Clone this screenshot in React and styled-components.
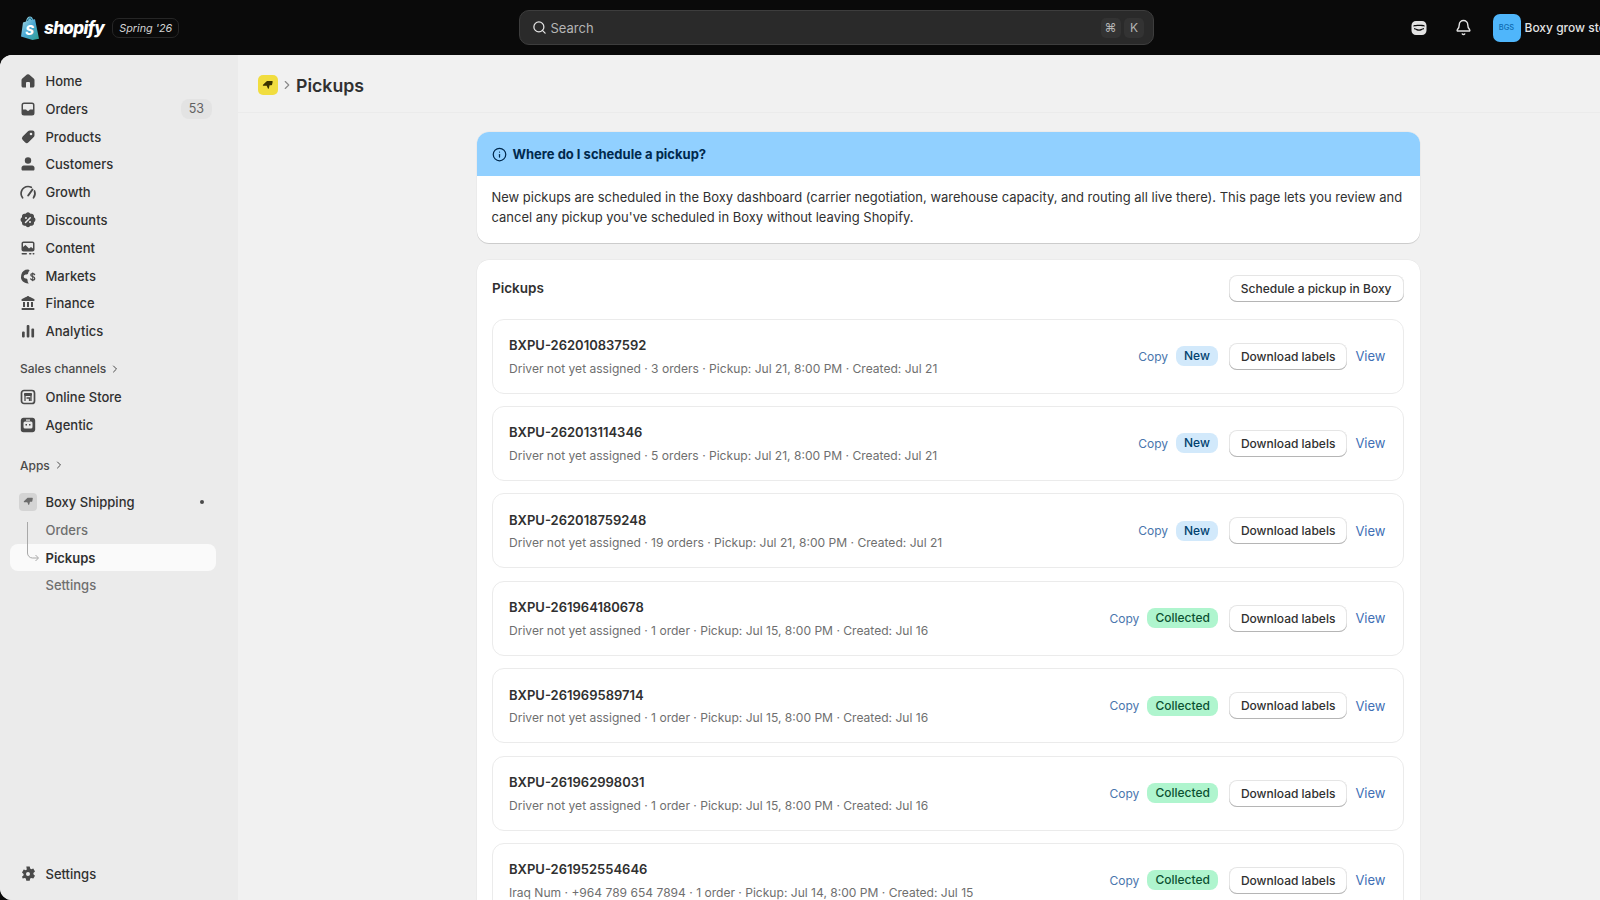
import styled, { createGlobalStyle } from "styled-components";
import { Search, Bell, Info, ChevronRight } from "lucide-react";

const GlobalStyle = createGlobalStyle`
  html, body {
    margin: 0;
    height: 100%;
    overflow: hidden;
    background: #0a0a0a;
  }
  body {
    font-family: Inter, "Liberation Sans", sans-serif;
    font-size: 13px;
    color: #303030;
  }
  * { box-sizing: border-box; }
`;

const Page = styled.div`
  display: flex;
  flex-direction: column;
  width: 1600px;
  height: 900px;
  overflow: hidden;
`;

const TopBar = styled.header`
  display: flex;
  align-items: center;
  flex: 0 0 55px;
  background: #0a0a0a;
  white-space: nowrap;
`;

const Brand = styled.div`
  display: flex;
  align-items: center;
  flex: 0 0 519px;
  padding-left: 20px;
`;

const Wordmark = styled.span`
  margin-left: 4px;
  font-size: 17px;
  font-weight: 800;
  font-style: italic;
  letter-spacing: -0.6px;
  color: #fff;
`;

const EditionTag = styled.span`
  margin-left: 8px;
  padding: 0 6px;
  height: 20px;
  line-height: 19px;
  border: 1px solid #262626;
  border-radius: 7px;
  font-size: 10.8px;
  font-style: italic;
  color: #d4d4d4;
`;

const SearchBox = styled.div`
  display: flex;
  align-items: center;
  gap: 3.5px;
  flex: 0 0 635px;
  height: 35px;
  padding: 0 9px 0 12px;
  background: #2a2a2a;
  border: 1px solid #3d3d3d;
  border-radius: 10px;
  color: #b5b5b5;
`;

const SearchLabel = styled.span`
  flex: 1;
  font-size: 13px;
`;

const KeyCap = styled.span`
  width: 20px;
  height: 20px;
  line-height: 20px;
  border-radius: 5px;
  background: #333;
  text-align: center;
  font-size: 12px;
  color: #b5b5b5;
`;

const TopActions = styled.div`
  display: flex;
  align-items: center;
  padding-left: 255px;
  color: #e3e3e3;
`;

const ActionIcon = styled.span`
  display: flex;
  align-items: center;
  justify-content: center;
  width: 20px;
  margin-right: ${(p) => p.$gap}px;
`;

const Avatar = styled.span`
  width: 28px;
  height: 28px;
  line-height: 28px;
  border-radius: 7px;
  background: #4fb6fb;
  text-align: center;
  font-size: 7.5px;
  font-weight: 500;
  color: #0e6bb0;
`;

const StoreName = styled.span`
  margin-left: 4px;
  font-size: 12px;
  font-weight: 500;
  color: #e3e3e3;
`;

const Frame = styled.div`
  display: flex;
  flex: 1;
  min-height: 0;
  background: #f1f1f1;
  border-radius: 12px 0 0 12px;
  overflow: hidden;
`;

const Sidebar = styled.nav`
  display: flex;
  flex-direction: column;
  flex: 0 0 238px;
  padding: 12.2px 22px 12px 10px;
  background: #ebebeb;
`;

const NavRow = styled.div`
  position: relative;
  display: flex;
  align-items: center;
  height: 27.8px;
  padding-left: 8px;
  border-radius: 8px;
  font-weight: ${(p) => (p.$active ? 600 : 500)};
  font-size: 13px;
  color: ${(p) => (p.$sub ? "#6f6f6f" : "#303030")};
  background: ${(p) => (p.$active ? "#fafafa" : "transparent")};
  ${(p) => p.$active && "color: #303030;"}
`;

const NavIcon = styled.span`
  display: flex;
  flex: 0 0 20px;
  height: 20px;
  color: #4a4a4a;
  margin-right: 7.5px;
`;

const SubSpacer = styled.span`
  flex: 0 0 27.5px;
`;

const Count = styled.span`
  margin-left: auto;
  margin-right: 4px;
  padding: 0 8px;
  height: 20px;
  line-height: 20px;
  border-radius: 8px;
  background: #e3e3e3;
  font-size: 12.5px;
  font-weight: 400;
  color: #616161;
`;

const PinDot = styled.span`
  margin-left: auto;
  margin-right: 12px;
  width: 4px;
  height: 4px;
  border-radius: 50%;
  background: #4a4a4a;
`;

const SectionHead = styled.div`
  display: flex;
  align-items: center;
  gap: 3px;
  height: 28px;
  margin-top: ${(p) => p.$top}px;
  margin-bottom: ${(p) => p.$bottom || 0}px;
  padding-left: 10px;
  font-size: 12px;
  font-weight: 550;
  color: #4a4a4a;
`;

const TreeLine = styled.svg`
  position: absolute;
  left: 16px;
  top: -22px;
  color: #a8a8a8;
`;

const SidebarFoot = styled.div`
  margin-top: auto;
`;

const Main = styled.main`
  flex: 1;
  min-width: 0;
`;

const PageHeader = styled.div`
  display: flex;
  align-items: center;
  height: 58px;
  padding: 3px 0 0 20px;
  border-bottom: 1px solid #ebebeb;
`;

const AppMark = styled.span`
  display: flex;
  align-items: center;
  justify-content: center;
  width: 20px;
  height: 20px;
  border-radius: 5px;
  background: #f1dd3f;
  color: #3a3200;
`;

const Crumb = styled.span`
  display: flex;
  margin: 0 2px 0 2px;
  color: #8a8a8a;
`;

const PageTitle = styled.h1`
  margin: 0;
  font-size: 17.7px;
  font-weight: 600;
  color: #303030;
`;

const Content = styled.div`
  display: flex;
  flex-direction: column;
  gap: 17px;
  width: 943px;
  margin-left: 238.5px;
  padding-top: 19px;
`;

const Card = styled.section`
  background: #fff;
  border-radius: 12px;
  box-shadow: 0 1px 0 rgba(0, 0, 0, 0.13), 0 0 0 0.5px rgba(0, 0, 0, 0.05);
  overflow: hidden;
`;

const BannerHead = styled.div`
  display: flex;
  align-items: center;
  gap: 6px;
  height: 44px;
  padding-left: 15px;
  background: #91d0ff;
  font-weight: 650;
  font-size: 13px;
  color: #00294d;
`;

const BannerBody = styled.p`
  margin: 0;
  padding: 12px 15px 15px;
  line-height: 19.8px;
  font-size: 12.97px;
`;

const ListCard = styled(Card)`
  padding: 15px 16px 16px 15.500px;
`;

const ListHead = styled.div`
  display: flex;
  align-items: center;
  justify-content: space-between;
  margin-bottom: 17px;
`;

const ListTitle = styled.h2`
  margin: 0;
  font-size: 13.5px;
  font-weight: 600;
`;

const WhiteButton = styled.button`
  height: 27px;
  padding: 0 12px;
  border: 0;
  border-radius: 8px;
  background: #fff;
  box-shadow: inset 0 -1px 0 #b5b5b5, inset 0 0 0 1px rgba(0, 0, 0, 0.1);
  font: 550 12px Inter, "Liberation Sans", sans-serif;
  color: #303030;
`;

const PickupList = styled.div`
  display: flex;
  flex-direction: column;
  gap: 12.4px;
`;

const PickupRow = styled.article`
  display: flex;
  align-items: center;
  flex: 0 0 75px;
  padding: 0 17px 0 16px;
  border: 1px solid #ebebeb;
  border-radius: 12px;
  background: #fff;
`;

const PickupText = styled.div`
  flex: 1;
  min-width: 0;
  padding-top: 1.5px;
`;

const PickupId = styled.div`
  font-size: 13px;
  font-weight: 600;
  line-height: 20px;
  color: #303030;
`;

const PickupMeta = styled.div`
  margin-top: 3.5px;
  font-size: 12.07px;
  line-height: 20px;
  color: #6f6f6f;
`;

const CopyLink = styled.a`
  margin-right: 8px;
  font-size: 12px;
  color: #4a76ad;
`;

const Pill = styled.span`
  height: 20px;
  line-height: 20px;
  padding: 0 8px;
  margin-right: 11px;
  border-radius: 8px;
  font-size: 12px;
  font-weight: 500;
  background: ${(p) => (p.$tone === "Collected" ? "#aff5ce" : "#d2e9fb")};
  color: ${(p) => (p.$tone === "Collected" ? "#0c5132" : "#00416e")};
`;

const ViewLink = styled.a`
  margin-left: 8px;
  font-size: 13px;
  color: #3f6fb5;
`;

const BoxyIcon = styled.span`
  display: flex;
  align-items: center;
  justify-content: center;
  flex: 0 0 18px;
  height: 18px;
  margin: 0 8.5px 0 1px;
  border-radius: 4px;
  background: #d4d4d4;
  color: #6b6b6b;
`;

const svgProps = { width: 20, height: 20, viewBox: "0 0 20 20", fill: "currentColor" };

const icons = {
  home: (
    <svg {...svgProps}>
      <path d="M8.900 3.600a1.700 1.700 0 0 1 2.200 0l4.600 3.900c.5.400.8 1 .8 1.600v5.600c0 1-.8 1.800-1.800 1.800H12v-4.600a1 1 0 0 0-1-1H9a1 1 0 0 0-1 1v4.600H5.300c-1 0-1.800-.8-1.800-1.800V9.100c0-.6.3-1.200.8-1.600z" />
    </svg>
  ),
  orders: (
    <svg {...svgProps}>
      <path fillRule="evenodd" d="M6 3.500h8A2.500 2.500 0 0 1 16.500 6v8a2.500 2.500 0 0 1-2.500 2.500H6A2.500 2.500 0 0 1 3.500 14V6A2.500 2.500 0 0 1 6 3.500zM6 5a1 1 0 0 0-1 1v4.500h2.800c.5 0 .8.300 1 .7l.2.500h2l.2-.500c.2-.4.500-.7 1-.7H15V6a1 1 0 0 0-1-1z" />
    </svg>
  ),
  products: (
    <svg {...svgProps}>
      <path fillRule="evenodd" d="M11.800 3.500h2.700c1.100 0 2 .9 2 2v2.700c0 .7-.3 1.300-.7 1.800l-5.300 5.300a2.500 2.500 0 0 1-3.500 0l-2.300-2.300a2.500 2.500 0 0 1 0-3.500L10 4.200c.5-.4 1.100-.7 1.800-.7zM13 8.300a1.300 1.300 0 1 0 0-2.600 1.300 1.300 0 0 0 0 2.600z" />
    </svg>
  ),
  customers: (
    <svg {...svgProps}>
      <circle cx="10" cy="6.500" r="3.200" />
      <path d="M5.800 11.500h8.400c1.300 0 2.300 1 2.300 2.300v1.400c0 .7-.6 1.300-1.300 1.300H4.800c-.7 0-1.300-.6-1.300-1.300v-1.400c0-1.300 1-2.300 2.300-2.300z" />
    </svg>
  ),
  growth: (
    <svg {...svgProps} fill="none" stroke="currentColor" strokeWidth="1.700" strokeLinecap="round">
      <path d="M4.600 15.800A7 7 0 0 1 10 4.500c1.200 0 2.300.3 3.300.8" />
      <path d="M16.500 9a7 7 0 0 1-1 6.800" />
      <path d="M10.200 13.500 14.500 7.500" strokeWidth="2" />
    </svg>
  ),
  discounts: (
    <svg {...svgProps}>
      <path fillRule="evenodd" d="M8.300 2.900c1-.9 2.400-.9 3.400 0l.8.800 1.100 0c1.300 0 2.400 1 2.400 2.400l0 1.100.8.800c.9 1 .9 2.400 0 3.400l-.8.800 0 1.100c0 1.300-1 2.400-2.400 2.400l-1.100 0-.8.800c-1 .9-2.400.9-3.400 0l-.8-.8-1.100 0a2.400 2.400 0 0 1-2.400-2.400l0-1.100-.8-.8c-.9-1-.9-2.400 0-3.400l.8-.8 0-1.100c0-1.300 1-2.400 2.400-2.400l1.100 0zM8 9a1 1 0 1 0 0-2 1 1 0 0 0 0 2zm4 4a1 1 0 1 0 0-2 1 1 0 0 0 0 2zm.8-5.800a.8.800 0 0 0-1.100 0l-4.500 4.500a.8.800 0 1 0 1.100 1.100l4.500-4.500a.8.800 0 0 0 0-1.100z" />
    </svg>
  ),
  content: (
    <svg {...svgProps}>
      <path fillRule="evenodd" d="M5.500 3.500h9c1.100 0 2 .9 2 2v6c0 1.100-.9 2-2 2h-9c-1.100 0-2-.9-2-2v-6c0-1.100.9-2 2-2zm0 1.500a.5.500 0 0 0-.5.500V9l2.500-2 3.500 3.500 2-1.500 2 1.500v-5a.5.500 0 0 0-.5-.5z" />
      <rect x="3.500" y="15" width="5.500" height="1.500" rx=".7" />
      <rect x="11" y="15" width="2.500" height="1.500" rx=".7" />
      <rect x="14.500" y="15" width="2" height="1.500" rx=".7" />
    </svg>
  ),
  markets: (
    <svg {...svgProps}>
      <path d="M10 3.500a7 7 0 0 0-3 13.300c1.200.5 2.500.7 3.800.6-.8-.8-1.300-2-1.300-3.400 0-1-.8-1.500-1.800-1.500-1.100 0-2-.9-2-2 0-1.600 1.500-2 2.800-2 1.300 0 1.600-.7 1.800-2 .1-.8.700-1.600 1.500-2.100-.8-.3-1.500-.9-1.800-.9z" />
      <path d="M16.600 8.600c-.4-.7-1.100-1-1.900-1-1 0-1.900.5-1.900 1.500 0 2.100 3.900 1.100 3.900 3.300 0 1-.9 1.600-2 1.600-.9 0-1.600-.4-2-1.100" fill="none" stroke="currentColor" strokeWidth="1.300" strokeLinecap="round" />
      <path d="M14.700 6.500v8.700" fill="none" stroke="currentColor" strokeWidth="1" />
    </svg>
  ),
  finance: (
    <svg {...svgProps}>
      <path d="M9.300 3.200c.4-.2 1-.2 1.400 0l5.300 2.700c.3.200.5.500.5.800v.8c0 .3-.2.500-.5.500H4c-.3 0-.5-.2-.5-.5v-.8c0-.3.2-.6.500-.8z" />
      <rect x="5" y="9" width="2" height="5" />
      <rect x="9" y="9" width="2" height="5" />
      <rect x="13" y="9" width="2" height="5" />
      <rect x="3.500" y="15" width="13" height="2" rx=".7" />
    </svg>
  ),
  analytics: (
    <svg {...svgProps}>
      <rect x="4" y="10.500" width="2.700" height="6" rx="1" />
      <rect x="8.700" y="4" width="2.700" height="12.500" rx="1" />
      <rect x="13.400" y="7.500" width="2.700" height="9" rx="1" />
    </svg>
  ),
  store: (
    <svg {...svgProps} fill="none" stroke="currentColor">
      <rect x="3.500" y="3.500" width="13" height="13" rx="2.500" strokeWidth="1.700" />
      <path d="M6.500 6.500h7v2h-7z" fill="currentColor" strokeWidth="1" />
      <path d="M7 9v5M13 9v5M8.500 11h3v3" strokeWidth="1.300" />
    </svg>
  ),
  agentic: (
    <svg {...svgProps}>
      <path fillRule="evenodd" d="M5.500 2.800h9c1.500 0 2.700 1.200 2.700 2.700v9c0 1.500-1.200 2.700-2.700 2.700h-9a2.700 2.700 0 0 1-2.700-2.700v-9c0-1.500 1.200-2.700 2.700-2.700zM7 6.500a1.500 1.500 0 0 0-1.500 1.500v4A1.500 1.500 0 0 0 7 13.500h6a1.500 1.500 0 0 0 1.500-1.500V8A1.500 1.500 0 0 0 13 6.500z" />
      <rect x="7.500" y="9" width="1.500" height="1.500" />
      <rect x="11" y="9" width="1.500" height="1.500" />
      <rect x="8" y="4.500" width="4" height="1.200" fill="#ebebeb" />
    </svg>
  ),
  settings: (
    <svg {...svgProps}>
      <path fillRule="evenodd" d="M8.300 2.500h3.400l.5 2.100 1 .6 2.100-.6 1.700 2.900-1.600 1.500v1.200l1.600 1.500-1.700 2.900-2.100-.6-1 .6-.5 2.100H8.300l-.5-2.100-1-.6-2.100.6L4 12.700l1.600-1.500V10L4 8.500l1.700-2.900 2.100.6 1-.6zM10 12a2 2 0 1 0 0-4 2 2 0 0 0 0 4z" />
    </svg>
  ),
};

const ShopifyBag = () => (
  <svg width="20" height="24" viewBox="0 0 20 24">
    <defs>
      <linearGradient id="bag" x1="0" y1="0" x2="1" y2="1">
        <stop offset="0" stopColor="#b5dfe0" />
        <stop offset="0.5" stopColor="#4aa8d4" />
        <stop offset="1" stopColor="#2f9f8f" />
      </linearGradient>
    </defs>
    <path d="M1 20.500 3 6.500c1-.5 2-.8 3-1.100C6.500 2.500 8 .6 10 .6c1.600 0 2.700 1.200 3 3l2-.3 4 19.500-6.500 1.200z" fill="url(#bag)" />
    <path d="M7.500 5c.4-1.800 1.300-3 2.400-3 .9 0 1.500.9 1.700 2" fill="none" stroke="#0f5f78" strokeWidth="1" />
    <text x="5.200" y="18.500" fontFamily="Inter, sans-serif" fontWeight="800" fontStyle="italic" fontSize="13" fill="#fff">S</text>
  </svg>
);

// rounded face with two dark bars, top bar right
const FaceIcon = () => (
  <svg width="18" height="18" viewBox="0 0 18 18" fill="currentColor">
    <path fillRule="evenodd" d="M6 2h6c2.500 0 4.500 2 4.500 4.500v5c0 2.500-2 4.500-4.500 4.500H6a4.500 4.500 0 0 1-4.500-4.500v-5C1.500 4 3.500 2 6 2zM3.500 6.300v1.400c1.500-.4 2.800-.6 5.500-.6s4 .2 5.500.6V6.300C13 5.900 11.700 5.700 9 5.700s-4 .2-5.500.6zM4 10.300c1 .2 1.600.4 2.500.9.700.4 1.500.5 2.500.5s1.800-.1 2.500-.5c.9-.5 1.500-.7 2.500-.9v-1.200c-1.200.2-2 .5-3 1-.6.300-1.200.4-2 .4s-1.400-.1-2-.4c-1-.5-1.800-.8-3-1z" />
  </svg>
);

const AppGlyph = ({ size = 12 }) => (
  <svg width={size} height={size} viewBox="0 0 12 12" fill="currentColor">
    <path d="M1 5.700 4.700 2.300c.2-.2.400-.3.700-.3H10c.5 0 .8.400.7.800l-.6 2.800c-.1.400-.4.700-.8.700H7.600l-.8 3.100c-.1.400-.7.500-.9.100L4.700 6.800H1.300c-.4 0-.6-.8-.3-1.100z" />
  </svg>
);

const mainNav = [
  ["home", "Home"],
  ["orders", "Orders", 53],
  ["products", "Products"],
  ["customers", "Customers"],
  ["growth", "Growth"],
  ["discounts", "Discounts"],
  ["content", "Content"],
  ["markets", "Markets"],
  ["finance", "Finance"],
  ["analytics", "Analytics"],
];

const pickups = [
  ["BXPU-262010837592", "Driver not yet assigned · 3 orders · Pickup: Jul 21, 8:00 PM · Created: Jul 21", "New"],
  ["BXPU-262013114346", "Driver not yet assigned · 5 orders · Pickup: Jul 21, 8:00 PM · Created: Jul 21", "New"],
  ["BXPU-262018759248", "Driver not yet assigned · 19 orders · Pickup: Jul 21, 8:00 PM · Created: Jul 21", "New"],
  ["BXPU-261964180678", "Driver not yet assigned · 1 order · Pickup: Jul 15, 8:00 PM · Created: Jul 16", "Collected"],
  ["BXPU-261969589714", "Driver not yet assigned · 1 order · Pickup: Jul 15, 8:00 PM · Created: Jul 16", "Collected"],
  ["BXPU-261962998031", "Driver not yet assigned · 1 order · Pickup: Jul 15, 8:00 PM · Created: Jul 16", "Collected"],
  ["BXPU-261952554646", "Iraq Num · +964 789 654 7894 · 1 order · Pickup: Jul 14, 8:00 PM · Created: Jul 15", "Collected"],
];

export default function App() {
  return (
    <Page>
      <GlobalStyle />
      <TopBar>
        <Brand>
          <ShopifyBag />
          <Wordmark>shopify</Wordmark>
          <EditionTag>Spring '26</EditionTag>
        </Brand>
        <SearchBox>
          <Search size={15} strokeWidth={2} color="#e3e3e3" />
          <SearchLabel>Search</SearchLabel>
          <KeyCap>⌘</KeyCap>
          <KeyCap>K</KeyCap>
        </SearchBox>
        <TopActions>
          <ActionIcon $gap={24}><FaceIcon /></ActionIcon>
          <ActionIcon $gap={19.5}><Bell size={17} strokeWidth={2} /></ActionIcon>
          <Avatar>BGS</Avatar>
          <StoreName>Boxy grow store</StoreName>
        </TopActions>
      </TopBar>

      <Frame>
        <Sidebar>
          {mainNav.map(([icon, label, count]) => (
            <NavRow key={label}>
              <NavIcon>{icons[icon]}</NavIcon>
              {label}
              {count && <Count>{count}</Count>}
            </NavRow>
          ))}

          <SectionHead $top={9.8}>
            Sales channels <ChevronRight size={12} />
          </SectionHead>
          <NavRow>
            <NavIcon>{icons.store}</NavIcon>
            Online Store
          </NavRow>
          <NavRow>
            <NavIcon>{icons.agentic}</NavIcon>
            Agentic
          </NavRow>

          <SectionHead $top={12.5} $bottom={9}>
            Apps <ChevronRight size={12} />
          </SectionHead>
          <NavRow>
            <BoxyIcon><AppGlyph size={11} /></BoxyIcon>
            Boxy Shipping
            <PinDot />
          </NavRow>
          <NavRow $sub>
            <SubSpacer />
            Orders
          </NavRow>
          <NavRow $sub $active>
            <TreeLine width="24" height="40" viewBox="0 0 24 40" fill="none" stroke="currentColor">
              <path d="M1.500 0V31a5 5 0 0 0 5 5H12" />
              <path d="M9.500 33 12.500 36 9.500 39" />
            </TreeLine>
            <SubSpacer />
            Pickups
          </NavRow>
          <NavRow $sub>
            <SubSpacer />
            Settings
          </NavRow>

          <SidebarFoot>
            <NavRow>
              <NavIcon>{icons.settings}</NavIcon>
              Settings
            </NavRow>
          </SidebarFoot>
        </Sidebar>

        <Main>
          <PageHeader>
            <AppMark><AppGlyph /></AppMark>
            <Crumb><ChevronRight size={14} /></Crumb>
            <PageTitle>Pickups</PageTitle>
          </PageHeader>

          <Content>
            <Card>
              <BannerHead>
                <Info size={15} strokeWidth={2} />
                Where do I schedule a pickup?
              </BannerHead>
              <BannerBody>
                New pickups are scheduled in the Boxy dashboard (carrier negotiation, warehouse capacity, and routing all live there). This page lets you review and cancel any pickup you've scheduled in Boxy without leaving Shopify.
              </BannerBody>
            </Card>

            <ListCard>
              <ListHead>
                <ListTitle>Pickups</ListTitle>
                <WhiteButton>Schedule a pickup in Boxy</WhiteButton>
              </ListHead>
              <PickupList>
                {pickups.map(([id, meta, status]) => (
                  <PickupRow key={id}>
                    <PickupText>
                      <PickupId>{id}</PickupId>
                      <PickupMeta>{meta}</PickupMeta>
                    </PickupText>
                    <CopyLink>Copy</CopyLink>
                    <Pill $tone={status}>{status}</Pill>
                    <WhiteButton>Download labels</WhiteButton>
                    <ViewLink>View</ViewLink>
                  </PickupRow>
                ))}
              </PickupList>
            </ListCard>
          </Content>
        </Main>
      </Frame>
    </Page>
  );
}
